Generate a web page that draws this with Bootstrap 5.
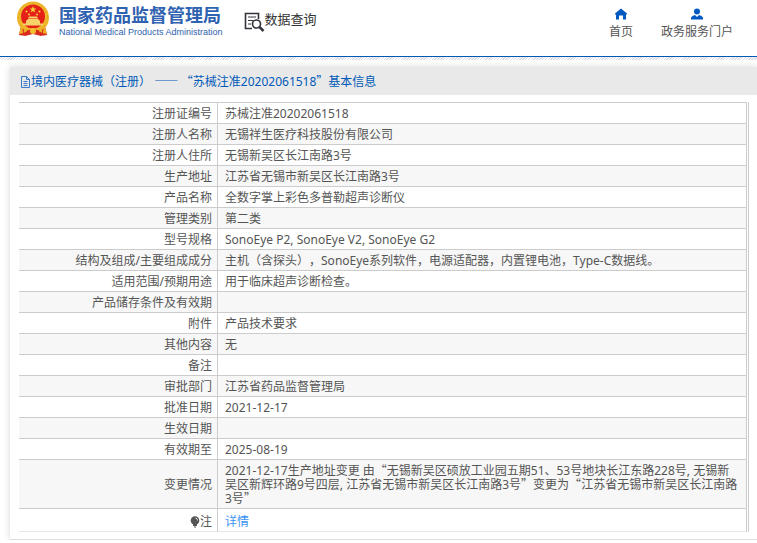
<!DOCTYPE html>
<html lang="zh-CN">
<head>
<meta charset="utf-8">
<meta name="viewport" content="width=device-width, initial-scale=1">
<title>国家药品监督管理局 数据查询</title>
<link href="https://cdn.jsdelivr.net/npm/bootstrap@5.3.0/dist/css/bootstrap.min.css" rel="stylesheet">
<style>
body{font-family:"Noto Sans","Noto Sans CJK SC",sans-serif;font-size:12px;line-height:14px;color:#555;background:#fff}
.site-head{height:57px;border-bottom:1px solid #0059b3;padding-left:15px;padding-right:24px}
.hatch{height:3px;background:repeating-linear-gradient(135deg,#fff 0 1px,#dcdce4 1px 2px)}
.brand{color:#2f62b0}
.brand-cn{font-size:18px;line-height:22px;font-weight:700}
.brand-en{font-family:"Liberation Sans",sans-serif;font-size:9px;line-height:12px;font-weight:400}
.query{font-size:13px;font-weight:400;color:#333;margin-left:21px}
.top-nav{gap:28px}
.top-nav a{color:#555;line-height:16px}
.panel{margin:7px 0 0 10px;border-bottom:1px solid #ddd;box-shadow:0 0 7px rgba(0,0,0,.16)}
.panel-title{height:28px;background:#e9e9e9;color:#0059b8;font-size:12px;line-height:28px;padding-left:10px;padding-top:1px}
.panel-main{padding:7px 8px 7px 9px}
.frame{border-right:1px solid #ccc;padding-right:1px}
.info{width:100%;border-collapse:separate;border-spacing:0;table-layout:fixed;border-right:1px solid #ccc}
.info col:first-child{width:199px}
.info th,.info td{border-top:1px solid #ccc;height:21px;padding:4px 5px 2px 7px;font-weight:400;vertical-align:middle}
.info th{text-align:right;border-right:1px solid #ccc}
.info tr:nth-child(even){background:#f7f7f7}
.info tr:last-child>*{height:24px;padding-top:5px;border-bottom:1px solid #e6e6ee}
.info a{color:#3793f5}
.quo{font-family:"Noto Sans CJK SC",sans-serif;line-height:12px;text-spacing-trim:space-all}
</style>
<script src="https://cdn.jsdelivr.net/npm/bootstrap@5.3.0/dist/js/bootstrap.bundle.min.js"></script>
</head>
<body>
<header class="site-head d-flex align-items-start">
  <div class="brand d-flex align-items-start">
    <svg width="36" height="38" viewBox="0 0 36 38" aria-hidden="true">
      <path d="M6 26 4 35l7 1 3-3h8l3 3 7-1-2-9z" fill="#d92a1c"/>
      <circle cx="18" cy="17.500" r="16" fill="#f0b92c"/>
      <circle cx="18" cy="17.500" r="14.500" fill="none" stroke="#e3a024" stroke-dasharray="2 2"/>
      <circle cx="18" cy="16.500" r="12" fill="#e32119"/>
      <path d="m18 6 .9 2.400h2.600l-2.100 1.600.8 2.500L18 11l-2.200 1.500.8-2.500-2.100-1.600h2.600z" fill="#fbd338"/>
      <g fill="#fbd338"><circle cx="11.500" cy="11.500" r="1"/><circle cx="24.500" cy="11.500" r="1"/><circle cx="14" cy="14.500" r="1"/><circle cx="22" cy="14.500" r="1"/></g>
      <path d="M13 18.500h10l-1-2h-8zM11 21h14l-2-2H13zM8 23.500h20v2H8zM11 21h14v3H11z" fill="#f7d268"/>
      <path d="M6 27q12 5 24 0l2 7-5-1-4-3H13l-4 3-5 1z" fill="#edaf25"/>
      <path d="M8 29l1 6M28 29l-1 6M12 31q6-3 12 0v4q-6-3-12 0z" fill="#d92a1c" stroke="#d92a1c"/>
      <circle cx="18" cy="31" r="3" fill="#f3c034"/>
    </svg>
    <div class="ms-2 pt-1">
      <div class="brand-cn">国家药品监督管理局</div>
      <div class="brand-en">National Medical Products Administration</div>
    </div>
  </div>
  <div class="query d-flex align-items-center pt-2">
    <svg class="mt-1" width="21" height="21" viewBox="0 0 21 21" fill="none" stroke="#34343e" aria-hidden="true">
      <path d="M8 16.500H1.500v-15h13V7" stroke-width="1.600"/>
      <path d="M4 5h8M4 8.500h5M4 12h3" stroke-width="1.200"/>
      <circle cx="12.500" cy="12" r="4" stroke-width="1.700"/>
      <path d="m15.500 15 4 4" stroke-width="2.500"/>
    </svg>
    <span class="pb-1">数据查询</span>
  </div>
  <nav class="top-nav d-flex ms-auto pt-2">
    <a href="#" class="text-decoration-none text-center">
      <svg class="d-block mx-auto" width="12" height="12" viewBox="0 0 12 11" aria-hidden="true"><path d="M6 0 0 5v1h1v5h3V7h4v4h3V6h1V5z" fill="#0059c0"/></svg>
      <span class="d-block pt-1">首页</span>
    </a>
    <a href="#" class="text-decoration-none text-center">
      <svg class="d-block mx-auto" width="12" height="12" viewBox="0 0 12 11" aria-hidden="true"><circle cx="6" cy="3" r="3" fill="#0059c0"/><path d="M0 11V9q1-2 4-2.500l2 2 2-2Q11 7 12 9v2z" fill="#0059c0"/></svg>
      <span class="d-block pt-1">政务服务门户</span>
    </a>
  </nav>
</header>
<div class="hatch"></div>
<main class="panel">
  <h1 class="panel-title d-flex align-items-center m-0 fw-normal">
    <svg width="11" height="12" viewBox="0 0 11 12" fill="none" stroke="#3878c8" aria-hidden="true"><path d="M1.500 .5h5l3 3v8h-8zM6.500 .5v3h3M3.500 5.500h4M3.500 7.500h4M3.500 9.500h4"/></svg>
    <span>境内医疗器械（注册） <span class="quo">—— “</span>苏械注准20202061518<span class="quo">”</span>基本信息</span>
  </h1>
  <div class="panel-main">
    <div class="frame">
      <table class="info">
        <colgroup><col><col></colgroup>
        <tbody>
        <tr><th scope="row">注册证编号</th><td>苏械注准20202061518</td></tr>
        <tr><th scope="row">注册人名称</th><td>无锡祥生医疗科技股份有限公司</td></tr>
        <tr><th scope="row">注册人住所</th><td>无锡新吴区长江南路3号</td></tr>
        <tr><th scope="row">生产地址</th><td>江苏省无锡市新吴区长江南路3号</td></tr>
        <tr><th scope="row">产品名称</th><td>全数字掌上彩色多普勒超声诊断仪</td></tr>
        <tr><th scope="row">管理类别</th><td>第二类</td></tr>
        <tr><th scope="row">型号规格</th><td>SonoEye P2, SonoEye V2, SonoEye G2</td></tr>
        <tr><th scope="row">结构及组成/主要组成成分</th><td>主机（含探头<span class="quo">），</span>SonoEye系列软件，电源适配器，内置锂电池，Type-C数据线。</td></tr>
        <tr><th scope="row">适用范围/预期用途</th><td>用于临床超声诊断检查。</td></tr>
        <tr><th scope="row">产品储存条件及有效期</th><td></td></tr>
        <tr><th scope="row">附件</th><td>产品技术要求</td></tr>
        <tr><th scope="row">其他内容</th><td>无</td></tr>
        <tr><th scope="row">备注</th><td></td></tr>
        <tr><th scope="row">审批部门</th><td>江苏省药品监督管理局</td></tr>
        <tr><th scope="row">批准日期</th><td>2021-12-17</td></tr>
        <tr><th scope="row">生效日期</th><td></td></tr>
        <tr><th scope="row">有效期至</th><td>2025-08-19</td></tr>
        <tr><th scope="row">变更情况</th><td>2021-12-17生产地址变更 由<span class="quo">“</span>无锡新吴区硕放工业园五期51、53号地块长江东路228号, 无锡新吴区新辉环路9号四层, 江苏省无锡市新吴区长江南路3号<span class="quo">”</span>变更为<span class="quo">“</span>江苏省无锡市新吴区长江南路3号<span class="quo">”</span></td></tr>
        <tr><th scope="row"><svg width="10" height="12" viewBox="0 0 10 12" aria-hidden="true"><circle cx="5" cy="4.500" r="4.300" fill="#555"/><path d="M3 8h4v2H3zM4 10.500h2v1H4z" fill="#555"/><path d="M5.500 2q2 .3 2 2.500" fill="none" stroke="#ddd"/></svg>注</th><td><a href="#" class="text-decoration-none">详情</a></td></tr>
        </tbody>
      </table>
    </div>
  </div>
</main>
</body>
</html>
